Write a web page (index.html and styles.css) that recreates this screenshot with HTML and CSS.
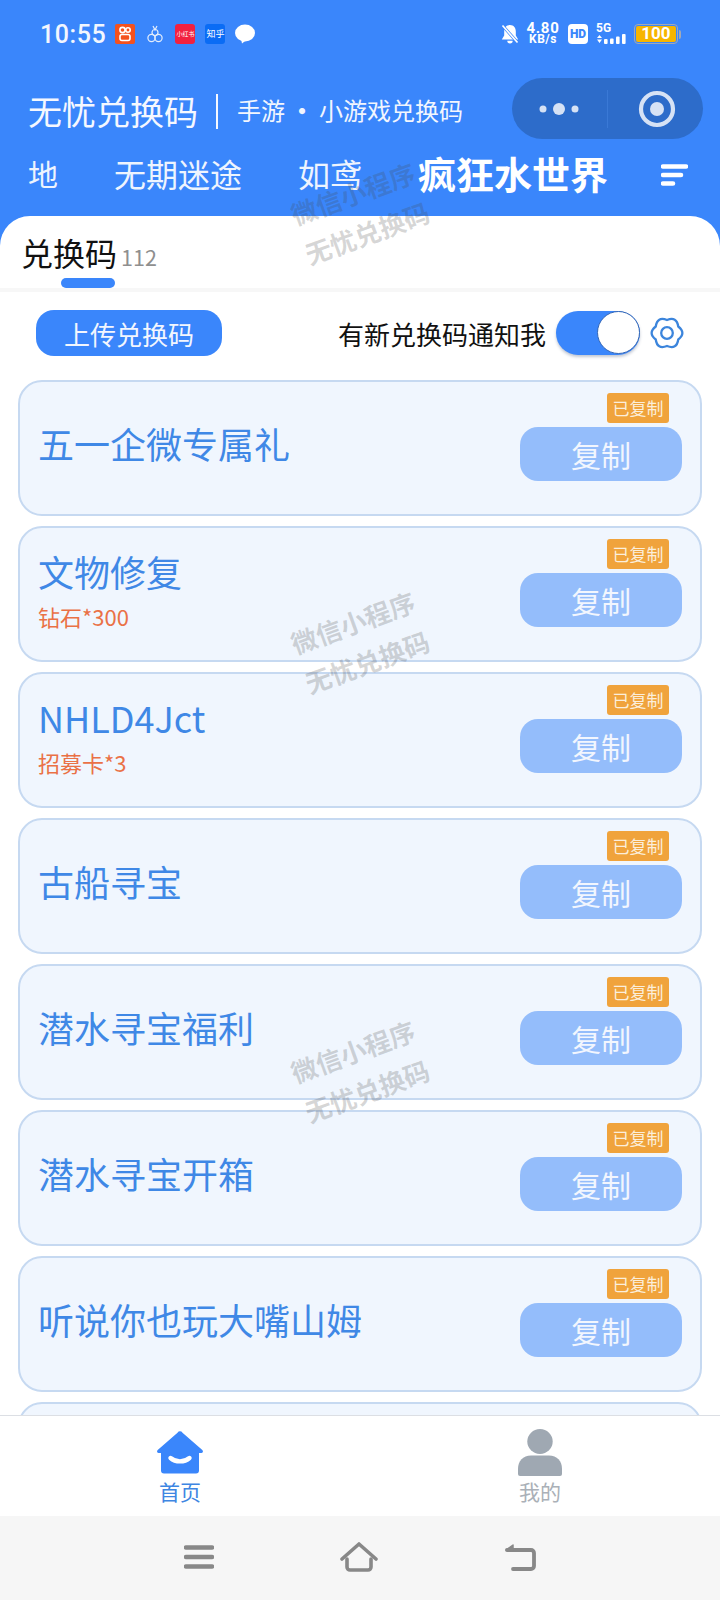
FILE: index.html
```html
<!DOCTYPE html>
<html lang="zh-CN">
<head>
    <meta charset="UTF-8">
    <meta name="viewport" content="width=device-width, initial-scale=1.0">
    <title>无忧兑换码</title>
    <link rel="stylesheet" href="styles.css">
</head>
<body>
    <div class="page">
        <header class="header">
            <div class="status">
                <span class="time">10:55</span>
                <svg class="app-ico" viewBox="0 0 20 20"><rect width="20" height="20" rx="2" fill="#f4511e"/><circle cx="7.500" cy="6" r="2.600" fill="none" stroke="#fff" stroke-width="1.600"/><circle cx="13" cy="6" r="2.200" fill="none" stroke="#fff" stroke-width="1.600"/><rect x="5" y="10.500" width="10" height="6" rx="2" fill="none" stroke="#fff" stroke-width="1.600"/></svg>
                <svg class="app-ico" viewBox="0 0 20 20" fill="none" stroke="#e4edfb" stroke-width="1.200"><circle cx="6.500" cy="14" r="3.600"/><circle cx="13.500" cy="14" r="3.600"/><circle cx="10" cy="8.500" r="3"/><path d="M8 2l2 4 2-4"/></svg>
                <span class="app-tile red">小红书</span>
                <span class="app-tile blue">知乎</span>
                <svg class="app-ico" viewBox="0 0 20 20"><ellipse cx="10" cy="9" rx="10" ry="8.400" fill="#fff"/><path d="M6 15l1 4.500 5-4z" fill="#fff"/></svg>
                <div class="status-right">
                    <svg class="bell" viewBox="0 0 20 20"><path d="M10 1c-3.800 0-5.800 2.900-5.800 6.400v4L1.800 15.500h16.400l-2.400-4.100v-4C15.800 3.900 13.800 1 10 1zM7.300 16.800a2.700 2.700 0 0 0 5.400 0z" fill="#fff"/><path d="M2.500 1.500l15 17" stroke="#3a86fb" stroke-width="3"/><path d="M2.500 1.500l15 17" stroke="#fff" stroke-width="1.700"/></svg>
                    <div class="speed"><b>4.80</b><span>KB/s</span></div>
                    <span class="hd">HD</span>
                    <div class="signal">
                        <span class="five-g">5G</span>
                        <svg viewBox="0 0 30 20" width="30" height="20"><path d="M1 14l2.500-3 2.500 3zM1 15.500h5l-2.500 3.500z" fill="#fff"/><rect x="8" y="15" width="3.600" height="5" rx="1" fill="#fff"/><rect x="14" y="14.500" width="3.600" height="5.500" rx="1" fill="#fff"/><rect x="20" y="12.500" width="3.600" height="7.500" rx="1" fill="#fff"/><rect x="26" y="10" width="3.600" height="10" rx="1" fill="#fff"/></svg>
                    </div>
                    <div class="battery"><span class="battery-fill">100</span></div>
                    <i class="battery-cap"></i>
                </div>
            </div>

            <div class="title-row">
                <h1 class="title">无忧兑换码</h1>
                <i class="title-line"></i>
                <span class="subtitle">手游<span class="dot">·</span>小游戏兑换码</span>
                <div class="capsule">
                    <svg class="capsule-dots" viewBox="0 0 40 14" width="40" height="14"><circle cx="4" cy="7" r="3.500"/><circle cx="20" cy="7" r="6"/><circle cx="36" cy="7" r="3.500"/></svg>
                    <i class="capsule-line"></i>
                    <svg class="capsule-ring" viewBox="0 0 38 38" width="38" height="38"><circle cx="19" cy="19" r="16" fill="none" stroke="#d6e2f5" stroke-width="4.200"/><circle cx="19" cy="19" r="7" fill="#d6e2f5"/></svg>
                </div>
            </div>

            <nav class="game-tabs">
                <span class="game-tab small">地</span>
                <span class="game-tab">无期迷途</span>
                <span class="game-tab">如鸢</span>
                <span class="game-tab active">疯狂水世界</span>
                <svg class="sort" viewBox="0 0 27 22" width="27" height="22"><path d="M2 2.500h23M2 11h18M2 19.500h10" stroke="#fff" stroke-width="4.600" stroke-linecap="round"/></svg>
            </nav>
        </header>

        <main class="panel">
            <div class="panel-tab">
                <span class="panel-tab-name">兑换码</span>
                <span class="panel-tab-count">112</span>
                <i class="panel-tab-bar"></i>
            </div>

            <div class="toolbar">
                <button class="upload">上传兑换码</button>
                <span class="notify">有新兑换码通知我</span>
                <div class="toggle"><i class="knob"></i></div>
                <svg class="gear" viewBox="0 0 34 34" width="34" height="34" fill="none" stroke="#3c85dc" stroke-width="2.300" stroke-linejoin="round"><path d="M17 4Q26.750.1 28.260 10.500 36.500 17 28.260 23.500 26.750 33.900 17 30 7.250 33.900 5.740 23.500-2.500 17 5.740 10.500 7.250.1 17 4z"/><circle cx="17" cy="17" r="5.800"/></svg>
            </div>

            <div class="cards">
                <div class="card">
                    <div class="card-text"><div class="card-name">五一企微专属礼</div></div>
                    <div class="card-side"><span class="copied">已复制</span><button class="copy">复制</button></div>
                </div>
                <div class="card">
                    <div class="card-text"><div class="card-name">文物修复</div><div class="card-gift">钻石*300</div></div>
                    <div class="card-side"><span class="copied">已复制</span><button class="copy">复制</button></div>
                </div>
                <div class="card">
                    <div class="card-text"><div class="card-name">NHLD4Jct</div><div class="card-gift">招募卡*3</div></div>
                    <div class="card-side"><span class="copied">已复制</span><button class="copy">复制</button></div>
                </div>
                <div class="card">
                    <div class="card-text"><div class="card-name">古船寻宝</div></div>
                    <div class="card-side"><span class="copied">已复制</span><button class="copy">复制</button></div>
                </div>
                <div class="card">
                    <div class="card-text"><div class="card-name">潜水寻宝福利</div></div>
                    <div class="card-side"><span class="copied">已复制</span><button class="copy">复制</button></div>
                </div>
                <div class="card">
                    <div class="card-text"><div class="card-name">潜水寻宝开箱</div></div>
                    <div class="card-side"><span class="copied">已复制</span><button class="copy">复制</button></div>
                </div>
                <div class="card">
                    <div class="card-text"><div class="card-name">听说你也玩大嘴山姆</div></div>
                    <div class="card-side"><span class="copied">已复制</span><button class="copy">复制</button></div>
                </div>
                <div class="card"></div>
            </div>
        </main>

        <footer class="tabbar">
            <div class="tabbar-item on">
                <svg viewBox="0 0 46 42" width="46" height="42"><path d="M20.500 1.200a3 3 0 0 1 5 0L45.300 18.500c1.200 1.400.6 3-.8 3H42V39a3 3 0 0 1-3 3H7a3 3 0 0 1-3-3V21.500H1.500c-1.400 0-2-1.600-.8-3z" fill="#3a86fb"/><path d="M13.500 26.500c5 4.500 14 4.500 19 0" fill="none" stroke="#fff" stroke-width="4.400" stroke-linecap="round"/></svg>
                <span>首页</span>
            </div>
            <div class="tabbar-item">
                <svg viewBox="0 0 44 47" width="44" height="47"><ellipse cx="22" cy="12.500" rx="12.700" ry="12.500" fill="#9fa8b2"/><path d="M0 40c0-8 5-13.500 13-13.500h18c8 0 13 5.500 13 13.500v5a2 2 0 0 1-2 2H2a2 2 0 0 1-2-2z" fill="#9fa8b2"/></svg>
                <span>我的</span>
            </div>
        </footer>

        <div class="sysbar">
            <svg viewBox="0 0 30 24" width="30" height="24"><path d="M2 2.500h26M2 12h26M2 21.500h26" stroke="#888" stroke-width="4.400" stroke-linecap="round"/></svg>
            <svg viewBox="0 0 38 30" width="38" height="30" fill="none" stroke="#888" stroke-width="3.600" stroke-linecap="round" stroke-linejoin="round"><path d="M2 17L19 2l17 15"/><path d="M7 17v8a3 3 0 0 0 3 3h18a3 3 0 0 0 3-3v-8"/></svg>
            <svg viewBox="0 0 32 28" width="32" height="28" fill="none" stroke="#888" stroke-width="3.800" stroke-linecap="round" stroke-linejoin="round"><path d="M3 7h24a3 3 0 0 1 3 3v13a3 3 0 0 1-3 3H9"/><path d="M2 7l7-5v5z" fill="#888" stroke-width="1.500"/></svg>
        </div>

        <div class="mark mark-1">微信小程序<br>无忧兑换码</div>
        <div class="mark mark-2">微信小程序<br>无忧兑换码</div>
        <div class="mark mark-3">微信小程序<br>无忧兑换码</div>
    </div>
</body>
</html>
```

FILE: styles.css
```css
* {
    box-sizing: border-box;
}
body {
    margin: 0;
    font-family: "Noto Sans CJK SC", "Noto Sans", sans-serif;
}
button {
    font-family: inherit;
    border: none;
    padding: 0;
}
.page {
    position: relative;
    width: 720px;
    height: 1600px;
    display: flex;
    flex-direction: column;
    overflow: hidden;
    background: #fff;
}

/* header */
.header {
    height: 216px;
    flex: none;
    background: #3a86fb;
    color: #fff;
}
.status {
    height: 68px;
    padding: 0 40px;
    display: flex;
    align-items: center;
}
.time {
    font-family: Roboto, sans-serif;
    font-size: 25px;
    font-weight: 500;
    letter-spacing: 0.6px;
    margin-right: 9px;
    color: #f2f6fe;
}
.app-ico {
    width: 20px;
    height: 20px;
    margin-right: 10px;
}
.app-tile {
    width: 20px;
    height: 20px;
    margin-right: 10px;
    border-radius: 3px;
    font-size: 7px;
    line-height: 20px;
    text-align: center;
    white-space: nowrap;
    overflow: hidden;
}
.app-tile.red {
    background: #f2213f;
    font-size: 6px;
}
.app-tile.blue {
    background: #0a6cf5;
    font-size: 9px;
}
.status-right {
    margin-left: auto;
    margin-right: -1px;
    display: flex;
    align-items: center;
}
.bell {
    width: 20px;
    height: 20px;
    margin-right: 7px;
}
.speed {
    width: 32px;
    display: flex;
    flex-direction: column;
    align-items: center;
    font-family: Roboto, sans-serif;
    line-height: 11px;
}
.speed b {
    font-size: 15px;
    font-weight: 700;
    letter-spacing: 0.7px;
}
.speed span {
    font-size: 12px;
    font-weight: 700;
    letter-spacing: 0.5px;
}
.hd {
    width: 20px;
    height: 20px;
    margin-left: 9px;
    border-radius: 4px;
    background: #fff;
    color: #3a86fb;
    font-family: Roboto, sans-serif;
    font-size: 12px;
    font-weight: 900;
    line-height: 20px;
    text-align: center;
}
.signal {
    position: relative;
    margin-left: 8px;
    width: 30px;
    height: 20px;
}
.five-g {
    position: absolute;
    left: 0;
    top: -3px;
    font-family: Roboto, sans-serif;
    font-size: 12px;
    font-weight: 700;
}
.battery {
    width: 44px;
    height: 20px;
    margin-left: 8px;
    padding: 1px;
    border: 1.500px solid #a2a9b5;
    border-radius: 4px;
}
.battery-fill {
    display: block;
    height: 100%;
    border-radius: 2px;
    background: #f7b500;
    font-family: Roboto, sans-serif;
    font-size: 17px;
    font-weight: 700;
    line-height: 15px;
    text-align: center;
}
.battery-cap {
    width: 2px;
    height: 9px;
    margin-left: 1px;
    background: #a2a9b5;
    border-radius: 0 2px 2px 0;
}
.title-row {
    height: 61px;
    margin-top: 10px;
    display: flex;
    align-items: center;
    padding: 0 17px 0 28px;
}
.title {
    margin: 4px 0 0;
    font-size: 34px;
    font-weight: 400;
    color: #f5f8ff;
}
.title-line {
    width: 2px;
    height: 35px;
    margin: 6px 19px 0 18px;
    background: #f5f8ff;
}
.subtitle {
    margin-top: 1px;
    font-size: 24px;
    color: #f2f6fe;
}
.dot {
    margin: 0 5px;
    font-weight: 700;
}
.capsule {
    margin-left: auto;
    width: 191px;
    height: 61px;
    border-radius: 31px;
    background: #2d6cca;
    display: flex;
    align-items: center;
}
.capsule-dots {
    fill: #d6e2f5;
    margin-left: 27px;
}
.capsule-line {
    width: 1px;
    height: 38px;
    margin-left: 28px;
    background: #3a79d6;
}
.capsule-ring {
    margin-left: 30px;
}
.game-tabs {
    height: 58px;
    margin-top: 5px;
    padding-left: 28px;
    display: flex;
    align-items: center;
    gap: 56px;
}
.game-tab {
    font-size: 32px;
    line-height: 44px;
    color: #eef4fe;
}
.game-tab.small {
    font-size: 30px;
}
.game-tab.active {
    font-size: 38px;
    font-weight: 700;
    color: #fff;
}
.sort {
    margin-left: -3px;
    margin-top: 4px;
}

/* panel */
.panel {
    position: relative;
    flex: 1;
    min-height: 0;
    overflow: hidden;
    background: #fff;
}
.panel::before {
    content: "";
    position: absolute;
    left: 0;
    right: 0;
    top: 0;
    height: 30px;
    background: #3a86fb;
}
.panel-tab {
    position: relative;
    height: 76px;
    padding: 16px 0 0 21px;
    border-bottom: 4px solid #f7f7f7;
    border-radius: 30px 30px 0 0;
    display: flex;
    align-items: center;
    background: #fff;
}
.panel-tab-name {
    margin-top: -16px;
    font-size: 32px;
    color: #111;
}
.panel-tab-count {
    margin: -8px 0 0 4px;
    font-size: 21.500px;
    color: #8f8f8f;
}
.panel-tab-bar {
    position: absolute;
    left: 61px;
    bottom: 0;
    width: 54px;
    height: 10px;
    border-radius: 5px;
    background: #3a86fb;
}
.toolbar {
    position: relative;
    height: 82px;
    padding: 0 36px;
    display: flex;
    align-items: center;
    background: #fff;
}
.upload {
    width: 186px;
    height: 46px;
    border-radius: 18px;
    background: #3a86fb;
    color: #f2f6fe;
    font-size: 26px;
}
.notify {
    margin-left: auto;
    font-size: 26px;
    color: #111;
}
.toggle {
    width: 84px;
    height: 44px;
    margin: 0 10px;
    border-radius: 22px;
    background: #3a86fb;
    display: flex;
    justify-content: flex-end;
    box-shadow: 0 2px 3px rgba(50, 70, 110, 0.3);
}
.knob {
    width: 43px;
    height: 43px;
    border-radius: 50%;
    background: #fff;
    border: 1px solid #3567b5;
}
.cards {
    position: relative;
    padding: 6px 18px 0;
    display: flex;
    flex-direction: column;
    gap: 10px;
    background: #fff;
}
.card {
    flex: none;
    height: 136px;
    padding: 11px 18px 0 18px;
    display: flex;
    justify-content: space-between;
    border: 2px solid #c6d9f1;
    border-radius: 24px;
    background: #f0f6fe;
}
.card-text {
    min-width: 0;
    margin-bottom: 22px;
    display: flex;
    flex-direction: column;
    justify-content: center;
}
.card-name {
    font-size: 36px;
    line-height: 50px;
    color: #3f88e6;
}
.card-gift {
    margin-top: 5px;
    font-size: 22px;
    line-height: 30px;
    color: #ea7146;
}
.card-side {
    width: 162px;
    display: flex;
    flex-direction: column;
    align-items: flex-end;
}
.copied {
    width: 62px;
    height: 30px;
    margin-right: 13px;
    border-radius: 3px;
    background: #f0a33c;
    color: #fbeedb;
    font-size: 17px;
    line-height: 30px;
    text-align: center;
}
.copy {
    width: 162px;
    height: 54px;
    margin-top: 4px;
    border-radius: 18px;
    background: #94bdfb;
    color: #f2f6fe;
    font-size: 30px;
}

/* bottom */
.tabbar {
    height: 101px;
    flex: none;
    position: relative;
    display: grid;
    grid-template-columns: 1fr 1fr;
    border-top: 1px solid #dcdfe4;
    background: #fff;
}
.tabbar-item {
    padding-top: 13px;
    height: 100px;
    display: flex;
    flex-direction: column;
    align-items: center;
    color: #aab0b7;
    font-size: 21px;
    line-height: 28px;
}
.tabbar-item svg {
    height: 47px;
}
.tabbar-item span {
    margin-top: 1px;
}
.tabbar-item.on {
    color: #3e86e2;
}
.sysbar {
    height: 84px;
    flex: none;
    padding-bottom: 2px;
    display: flex;
    justify-content: center;
    align-items: center;
    gap: 126px;
    background: #f6f6f6;
}

/* watermark */
.mark {
    position: absolute;
    left: 240px;
    width: 240px;
    font-size: 26px;
    font-weight: 700;
    line-height: 42px;
    text-align: center;
    color: rgba(70, 70, 70, 0.22);
    transform: rotate(-20deg);
}
.mark-1 {
    top: 171px;
}
.mark-2 {
    top: 600px;
}
.mark-3 {
    top: 1029px;
}
```
